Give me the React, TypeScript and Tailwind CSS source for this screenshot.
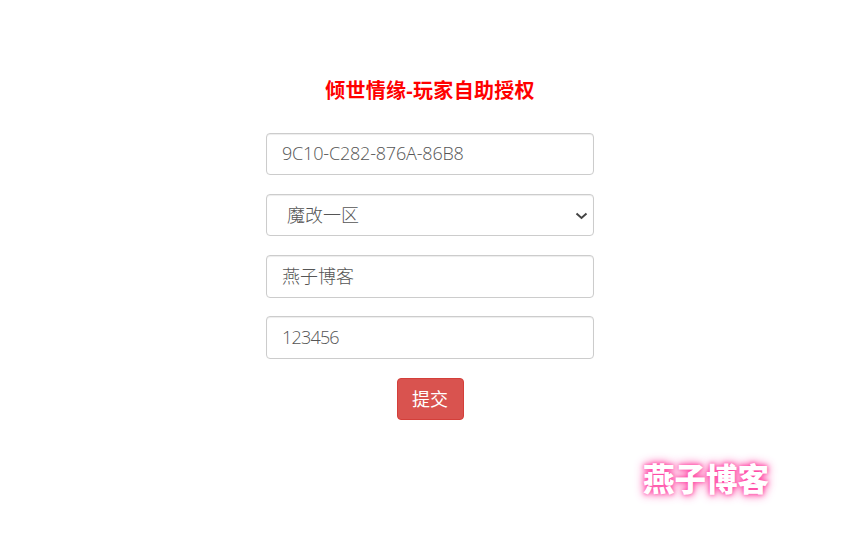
export default function App() {
  const fieldClass =
    "block w-full pl-[15px] pr-[15px] bg-white border border-[#ccc] rounded-[4px] text-[18px] font-light text-[#555] shadow-[inset_0_1px_1px_rgba(0,0,0,0.075)] outline-none";

  return (
    <div className="relative w-[844px] h-[540px] overflow-hidden bg-white font-['Open_Sans','Noto_Sans_CJK_SC',sans-serif]">
      <form className="w-[328px] ml-[266px] pt-[77px] flex flex-col">
        <h1 className="h-[28px] mb-[28px] text-center text-[20px] leading-[28px] font-bold tracking-[0.3px] text-[#ff0000] whitespace-nowrap">
          倾世情缘-玩家自助授权
        </h1>
        <div className="flex flex-col gap-[19px]">
          <input className={`${fieldClass} h-[42px] pb-[2px] tracking-[-0.18px]`} defaultValue="9C10-C282-876A-86B8" />
          <div className="relative">
            <select className={`${fieldClass} h-[42px] appearance-none pl-[20px]`} defaultValue="1">
              <option value="1">魔改一区</option>
            </select>
            <svg
              className="absolute right-[6px] top-[18px] pointer-events-none"
              width="13"
              height="8"
              viewBox="0 0 13 8"
              fill="none"
            >
              <path d="M1.5 1.5 L6.5 6 L11.5 1.5" stroke="#444" strokeWidth="2" />
            </svg>
          </div>
          <input className={`${fieldClass} h-[43px] pb-[3px]`} defaultValue="燕子博客" />
          <input className={`${fieldClass} h-[43px] -mt-px pb-[2px] tracking-[-0.8px]`} defaultValue="123456" />
        </div>
        <div className="mt-[19px] flex justify-center">
          <button
            type="button"
            className="w-[67px] h-[42px] bg-[#d9534f] border border-[#d43f3a] rounded-[4px] text-[18px] font-normal text-white"
          >
            提交
          </button>
        </div>
      </form>

      {/* watermark */}
      <div className="absolute left-[643px] top-[459px] text-[31.5px] leading-[40px] font-black text-white whitespace-nowrap [text-shadow:0_0_4px_#ff3fa0,0_0_8px_#ff5fb0,0_0_12px_#ff8fc8]">
        燕子博客
      </div>
    </div>
  );
}
